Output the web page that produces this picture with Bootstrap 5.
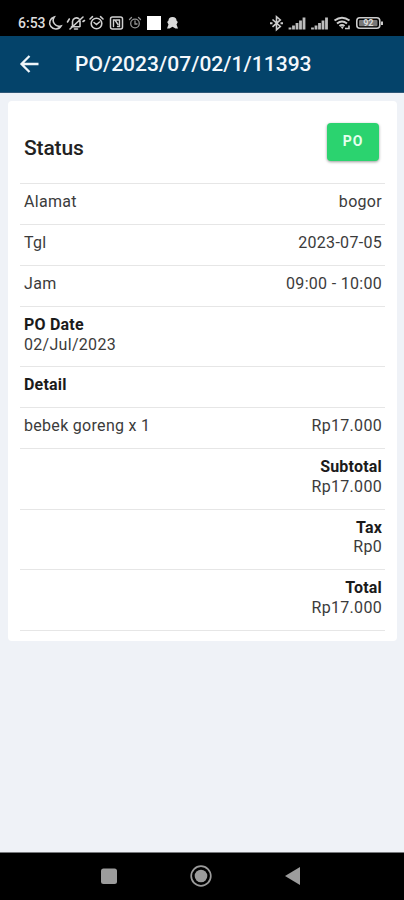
<!DOCTYPE html>
<html lang="id">
<head>
<meta charset="utf-8">
<meta name="viewport" content="width=device-width, initial-scale=1">
<title>PO/2023/07/02/1/11393</title>
<link href="https://cdn.jsdelivr.net/npm/bootstrap@5.3.0/dist/css/bootstrap.min.css" rel="stylesheet">
<style>
body{font-family:Roboto,sans-serif;font-size:16px;color:#3b3b3b;background:#eff2f7;height:900px;overflow:hidden}
.status-bar{height:36px;background:#000;color:#ddd;padding:11px 20px 0 18px}
.status-bar svg{display:block;flex:none}
.clock{font-size:14px;line-height:25px;width:30px;letter-spacing:0;font-weight:500;white-space:nowrap}
.app-bar{height:57px;background:#04436a;border-bottom:1px solid #2f5878;padding-left:19px}
.app-title{font-size:21px;font-weight:500;color:#f4f8fc;line-height:28px;margin:0 0 0 34px;letter-spacing:.03px}
.po-card{margin:8px 7px 0 8px;height:540px;border:0;border-radius:4px;padding:0 12px}
.line-item{border-bottom:1px solid #e6e6e6;height:41px;padding:8px 3px 0 4px;line-height:19.5px;letter-spacing:.3px}
.line-item.tall{height:60.4px}
.line-item.head{height:83px;padding:22px 6px 0 4px}
.line-item h2{font-size:21px;font-weight:500;color:#222;line-height:26px;margin:12px 0 0;letter-spacing:-.15px}
.line-item strong{font-weight:700;color:#1b1b1b;display:block;letter-spacing:.2px}
.btn-po{background:#2bd36f;color:#e5ffee;font-size:14px;font-weight:700;width:52px;height:38px;border:0;border-radius:4px;padding:0 0 1px;letter-spacing:.9px;box-shadow:0 1px 3px rgba(0,0,0,.4)}
.btn-po:hover{background:#25c465;color:#fff}
.nav-keys{height:48px;background:#000;border-top:1px solid #77797c;padding:0 102px 2px 100px}
</style>
<script src="https://cdn.jsdelivr.net/npm/bootstrap@5.3.0/dist/js/bootstrap.bundle.min.js"></script>
</head>
<body class="d-flex flex-column">
<div class="status-bar d-flex">
  <span class="clock">6:53</span>
  <svg width="136" height="24" viewBox="48 11 136 24" fill="none" stroke="#d0d0d0" stroke-width="1.6" stroke-linecap="round">
    <path d="M54.200 17a6.100 6.100 0 1 0 6.800 9 6 6 0 0 1-6.800-9z"/>
    <path d="M71.500 26.800h8M72.500 26.500v-5a4 4 0 0 1 6.300-2.800M80 21v5.500M74.500 29h3M70 29l13-12M67.500 22l1.800-3M83 21.500l1.500-1"/>
    <circle cx="96.500" cy="23.500" r="5.300"/><path d="M90 19l2.500-2.300M103 19l-2.500-2.300M94 22.500l2.500 2 3-2.500"/>
    <rect x="110.500" y="17" width="12" height="12" rx="2" stroke-width="1.500"/><path d="M113.500 26.500v-6.500h1.500l3 4.500M116 20h3.500v6.500h-2" stroke-width="1.400"/>
    <g stroke="#929292" stroke-width="1.300"><circle cx="135" cy="23.500" r="4.300"/><path d="M129.500 19.500l2-2M140.500 19.500l-2-2M135 21v3h2"/></g>
    <rect x="147" y="16" width="14" height="14" fill="#fff" stroke="none"/>
    <path d="M168.500 20.500a4 3.500 0 0 1 8 0l1.300 1.500-1.300 2.500 1.500 4h-2.500l-3-1.800-3 1.800h-2.500l1.500-4-1.300-2.500z" fill="#dadada" stroke="none"/>
  </svg>
  <svg class="ms-auto" width="116" height="24" viewBox="268 11 116 24" fill="none" stroke="#ccc" stroke-width="1.600">
    <path d="M272.500 19.500l7.800 7-3.800 3.200v-13l3.800 3.200-7.800 7"/><path d="M270 23.200h2.500M280.500 23.200h2.500" stroke-width="2"/>
    <path d="M290 29.500v-2M293.500 29.500v-4M297 29.500v-6.500M300.500 29.500v-9M304 29.500v-12M312.500 29.500v-2M316 29.500v-4M319.500 29.500v-6.500M323 29.500v-9M326.500 29.500v-12" stroke-width="2.800" stroke="#bdbdbd"/>
    <path d="M334.500 20.500q7.500-5.500 15 0M337 23.500q5-4 10 0M339.500 26q2.500-2 5 0" stroke-width="2.100"/><path d="M340.500 26.500h3.500l-1.700 2.800z" fill="#ccc" stroke="none"/><path d="M345 28.500h4v-3"/>
    <rect x="356.800" y="17.800" width="23" height="10.500" rx="3" stroke-width="1.600"/><rect x="359" y="20" width="18.500" height="6.200" rx="1" fill="#777" stroke="none"/><path d="M382 21.500v3.500" stroke-width="2"/>
    <text x="368.300" y="26.300" text-anchor="middle" font-family="Roboto, sans-serif" font-size="9" font-weight="700" fill="#ddd" stroke="none">92</text>
  </svg>
</div>
<header class="app-bar d-flex align-items-center">
  <svg width="22" height="20" viewBox="0 0 22 20" fill="none" stroke="#eef5fa" stroke-width="2.300"><path d="M19.500 10H3M10.500 2l-8 8 8 8"/></svg>
  <h1 class="app-title">PO/2023/07/02/1/11393</h1>
</header>
<main class="flex-grow-1">
  <section class="card po-card">
    <div class="line-item head d-flex justify-content-between"><h2>Status</h2><button class="btn btn-po" type="button">PO</button></div>
    <div class="line-item d-flex justify-content-between"><span>Alamat</span><span>bogor</span></div>
    <div class="line-item d-flex justify-content-between"><span>Tgl</span><span>2023-07-05</span></div>
    <div class="line-item d-flex justify-content-between"><span>Jam</span><span>09:00 - 10:00</span></div>
    <div class="line-item tall"><strong>PO Date</strong>02/Jul/2023</div>
    <div class="line-item"><strong>Detail</strong></div>
    <div class="line-item d-flex justify-content-between"><span>bebek goreng x 1</span><span>Rp17.000</span></div>
    <div class="line-item tall text-end"><strong>Subtotal</strong>Rp17.000</div>
    <div class="line-item tall text-end"><strong>Tax</strong>Rp0</div>
    <div class="line-item tall text-end"><strong>Total</strong>Rp17.000</div>
  </section>
</main>
<nav class="nav-keys d-flex align-items-center justify-content-between">
  <svg width="18" height="24" viewBox="0 0 18 24"><rect x="1" y="4.500" width="16" height="15.500" rx="2.500" fill="#9c9c9c"/></svg>
  <svg width="24" height="24" viewBox="0 0 24 24"><circle cx="12" cy="12" r="9.800" fill="none" stroke="#9c9c9c" stroke-width="1.700"/><circle cx="12" cy="12" r="6.300" fill="#9c9c9c"/></svg>
  <svg width="18" height="24" viewBox="0 0 18 24"><path d="M1 12L16 3v18z" fill="#9c9c9c"/></svg>
</nav>
</body>
</html>
